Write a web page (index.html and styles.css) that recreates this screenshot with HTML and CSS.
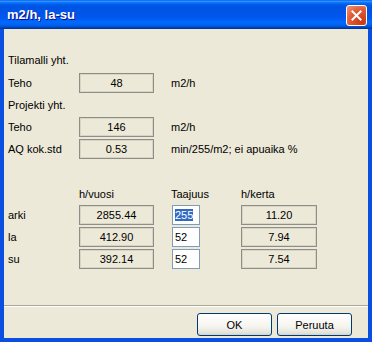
FILE: index.html
```html
<!DOCTYPE html>
<html>
<head>
  <link rel="stylesheet" href="styles.css">
</head>
<body>

<div class="window">
  <div class="titlebar">
    <span class="title">m2/h, la-su</span>
    <button type="button" class="closebtn" title="Sulje">
      <svg width="21" height="21" viewBox="0 0 21 21">
        <path d="M6 6 L15 15 M15 6 L6 15" stroke="#fff" stroke-width="2.2" stroke-linecap="square"/>
      </svg>
    </button>
  </div>

  <div class="client">
    <div class="form">
      <div class="caption">Tilamalli yht.</div>

      <div class="label">Teho</div>
      <div class="value">48</div>
      <div class="unit">m2/h</div>

      <div class="caption">Projekti yht.</div>

      <div class="label">Teho</div>
      <div class="value">146</div>
      <div class="unit">m2/h</div>

      <div class="label">AQ kok.std</div>
      <div class="value">0.53</div>
      <div class="unit">min/255/m2; ei apuaika %</div>

      <div class="head head-year">h/vuosi</div>
      <div class="head head-freq">Taajuus</div>
      <div class="head head-time">h/kerta</div>

      <div class="label">arki</div>
      <div class="value">2855.44</div>
      <div class="freq"><input type="text" value="255" id="freqArki"></div>
      <div class="value time">11.20</div>

      <div class="label">la</div>
      <div class="value">412.90</div>
      <div class="freq"><input type="text" value="52"></div>
      <div class="value time">7.94</div>

      <div class="label">su</div>
      <div class="value">392.14</div>
      <div class="freq"><input type="text" value="52"></div>
      <div class="value time">7.54</div>
    </div>

    <div class="footer">
      <button type="button" class="btn">OK</button>
      <button type="button" class="btn">Peruuta</button>
    </div>
  </div>
</div>

<script>
  var f = document.getElementById("freqArki");
  f.focus();
  f.select();
</script>

</body>
</html>
```

FILE: styles.css
```css
* {box-sizing: border-box}
body {
  margin: 0;
  font-family: "Liberation Sans", Arial, sans-serif;
  font-size: 11px;
  color: #000;
  background: #fff;
}

.window {
  width: 372px;
  height: 342px;
  display: flex;
  flex-direction: column;
  background: #0a4fe0;
}

.titlebar {
  height: 29px;
  flex: none;
  display: flex;
  align-items: center;
  padding: 0 5px 0 7px;
  background: linear-gradient(180deg, #0058ee, #3593ff 4%, #288eff 6%, #127dff 8%, #036ffc 10%, #0262ee 14%, #0057e5 20%, #0054e3 24%, #0055eb 56%, #005bf5 66%, #026afe 76%, #0062ef 86%, #0052d6 92%, #0040ab 96%, #003092);
}

.title {
  flex: 1;
  color: #fff;
  font-weight: bold;
  font-size: 13px;
  text-shadow: 1px 1px #0f1089;
}

.closebtn {
  width: 21px;
  height: 21px;
  padding: 0;
  border: 1px solid #fff;
  border-radius: 3px;
  background: radial-gradient(circle at 80% 85%, #c93a12, #e05a33 55%, #ec8a6c 92%);
  display: flex;
  align-items: center;
  justify-content: center;
  margin-top: 2px;
}

.closebtn svg {
  display: block;
}

.client {
  flex: 1;
  display: flex;
  flex-direction: column;
  margin: 0 4px 4px 4px;
  background: #ece9d8;
}

.form {
  display: grid;
  grid-template-columns: 71px 75px 17px 70px 76px 1fr;
  grid-template-rows: 23px 20px 20px 20px 20px 42px 20px 20px 20px;
  row-gap: 2px;
  padding: 19px 0 0 4px;
}

.caption {
  grid-column: 1 / -1;
  align-self: center;
}

.label {
  grid-column: 1;
  align-self: center;
}

.value {
  grid-column: 2;
  border: 1px solid #8e8d86;
  box-shadow: inset 0 0 0 1px #d8d5c6;
  text-align: center;
  line-height: 18px;
}

.unit {
  grid-column: 4 / -1;
  align-self: center;
}

.head {
  align-self: end;
  line-height: 18px;
}

.head-year {grid-column: 2;}
.head-freq {grid-column: 4;}
.head-time {grid-column: 5;}

.freq {
  grid-column: 4;
  padding-left: 1px;
}

.freq input {
  width: 28px;
  height: 20px;
  border: 1px solid #7f9db9;
  background: #fff;
  font-family: "Liberation Sans", Arial, sans-serif;
  font-size: 11px;
  padding: 0 2px;
  margin: 0;
  outline: none;
}

.freq input::selection {
  background: #316ac5;
  color: #fff;
}

.value.time {
  grid-column: 5;
}

.footer {
  margin-top: auto;
  border-top: 1px solid #aca899;
  box-shadow: inset 0 1px #fff;
  display: flex;
  justify-content: flex-end;
  gap: 5px;
  padding: 7px 16px 2px 0;
}

.btn {
  width: 75px;
  height: 23px;
  border: 1px solid #003c74;
  border-radius: 3px;
  background: linear-gradient(180deg, #fff, #f5f4ef 60%, #e3e2da 90%, #d6d0c5);
  font-family: "Liberation Sans", Arial, sans-serif;
  font-size: 11px;
  color: #000;
  padding: 0;
  cursor: pointer;
}
```
